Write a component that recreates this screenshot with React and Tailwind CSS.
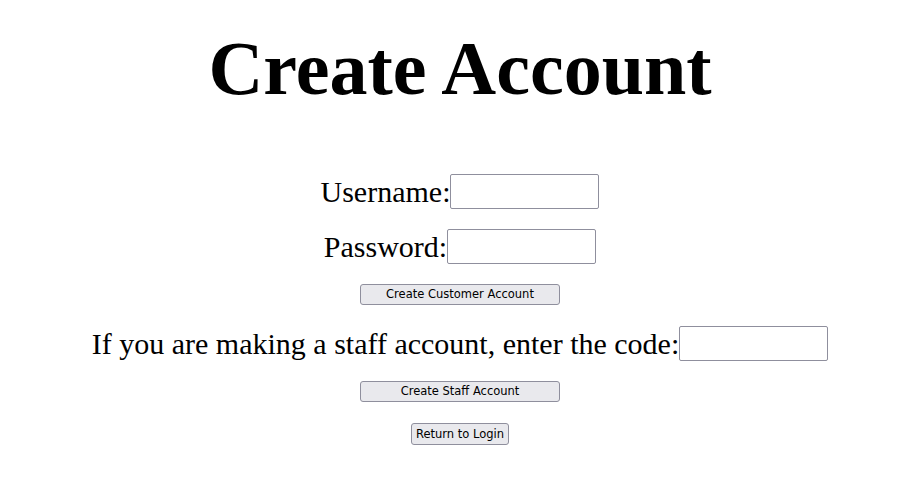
import React from "react";

const serif = { fontFamily: '"Liberation Serif", "Times New Roman", serif' };

const Field = ({ label, className = "" }) => (
  <div className={`flex items-center justify-center ${className}`}>
    <span className="text-[30px] leading-none">{label}</span>
    <input
      type="text"
      className="w-[149px] h-[35px] border border-[#8f8f9d] rounded-[2px] bg-white"
    />
  </div>
);

const Btn = ({ children, className = "" }) => (
  <button
    className={`h-[21px] pt-px bg-[#e9e9ed] border border-[#8f8f9d] rounded-[3px] text-[11.5px] leading-none text-black font-['DejaVu_Sans',sans-serif] ${className}`}
  >
    {children}
  </button>
);

const App = () => {
  return (
    <div className="w-full min-h-[494px] bg-white text-black flex flex-col items-center pl-[12px]" style={serif}>
      <h1 className="text-[76px] font-bold leading-none mt-[30px]">Create Account</h1>

      <Field label="Username:" className="mt-[68px]" />
      <Field label="Password:" className="mt-[20px]" />
      <Btn className="w-[200px] mt-[20px]">Create Customer Account</Btn>

      <Field label="If you are making a staff account, enter the code:" className="mt-[21px]" />
      <Btn className="w-[200px] mt-[20px]">Create Staff Account</Btn>
      <Btn className="w-[98px] h-[22px] mt-[21px]">Return to Login</Btn>
    </div>
  );
};

export default App;
